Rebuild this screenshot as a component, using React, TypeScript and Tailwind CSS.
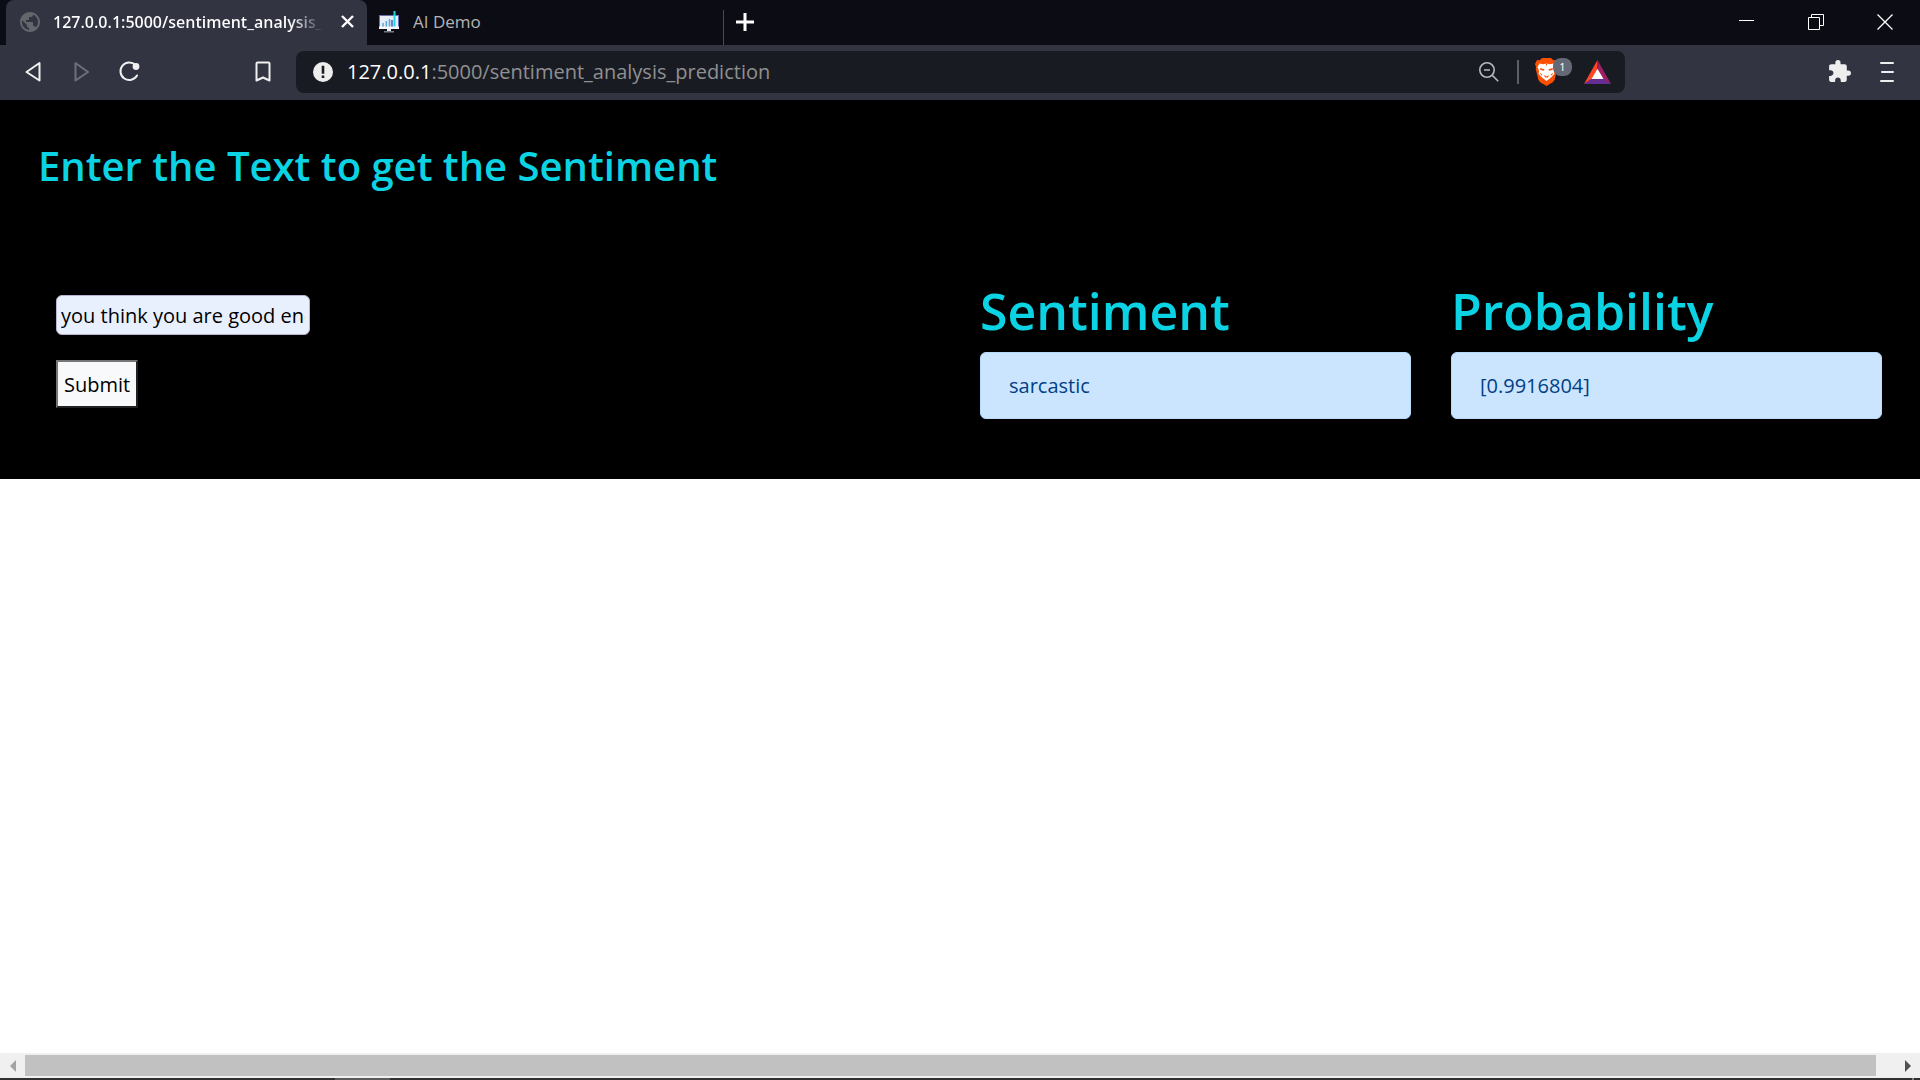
import React from "react";
import { MdExtension, MdPublic } from "react-icons/md";

function TabStrip() {
  return (
    <header className="flex h-[45px] items-stretch bg-[#0c0c14] pl-1.5 leading-6">
      <div className="flex w-[361px] items-center rounded-t-lg bg-[#323442] pr-3 pb-0.5 pl-3">
        <MdPublic className="size-6 shrink-0 text-[#63666b]" />
        <span className="ml-[11px] whitespace-nowrap bg-linear-to-r from-white from-88% to-transparent bg-clip-text text-base font-semibold text-transparent">
          127.0.0.1:5000/sentiment_analysis_
        </span>
        <button aria-label="Close tab" className="ml-auto">
          <svg width="13" height="13" viewBox="0 0 13 13" stroke="#fff" strokeWidth="2.4" className="mr-px">
            <path d="M1 1l11 11M12 1L1 12" />
          </svg>
        </button>
      </div>
      <div className="flex w-[356px] items-center pb-0.5 pl-3">
        <svg width="20" height="22" viewBox="0 0 20 22" aria-hidden="true">
          <path d="M5 20h10v1.6H5zM8 18h4v3H8z" fill="#777b84" />
          <rect x="8" y="18" width="4" height="2" fill="#e8ebf2" />
          <rect x="0.5" y="4.5" width="19" height="13" fill="#e9edf8" stroke="#6670a8" />
          <rect x="0" y="15.5" width="20" height="2.5" fill="#f5f6fa" />
          <path d="M4 12v3.500M7.300 10v5.500M10.500 8v7.500" stroke="#5aa9dc" strokeWidth="1.600" />
          <path d="M13 9v6.500" stroke="#4868c8" strokeWidth="1.600" />
          <path d="M15.500 0v15.500" stroke="#20d8e0" strokeWidth="2" />
        </svg>
        <span className="ml-3.5 text-[17px] text-[#b4b4b6]">AI Demo</span>
      </div>
      <div className="flex items-center">
        <span className="mt-2.5 w-px self-stretch bg-[#4c4c50]" />
        <button aria-label="New tab" className="ml-3 pb-0.5">
          <svg width="18" height="18" viewBox="0 0 18 18" stroke="#fff" strokeWidth="3">
            <path d="M9 0v18M0 9h18" />
          </svg>
        </button>
      </div>
      <div className="ml-auto flex items-center pr-px pb-0.5">
        <button aria-label="Minimize" className="flex w-[69px] justify-center">
          <svg width="15" height="15" viewBox="0 0 15 15"><path d="M0 6.500h15" stroke="#fff" /></svg>
        </button>
        <button aria-label="Restore" className="flex w-[69px] justify-center">
          <svg width="16" height="16" viewBox="0 0 16 16" fill="none" stroke="#fff">
            <path d="M0.500 3.500h11v12h-11zM3.500 3.500v-3h12v11h-4" />
          </svg>
        </button>
        <button aria-label="Close window" className="flex w-[69px] justify-center">
          <svg width="16" height="16" viewBox="0 0 16 16" stroke="#fff" strokeWidth="1.300"><path d="M.5.5l15 15M15.500.5l-15 15" /></svg>
        </button>
      </div>
    </header>
  );
}

function ShieldLion() {
  return (
    <svg width="23" height="28" viewBox="0 0 23 28" aria-hidden="true">
      <path d="M7 0h9l2.300 2.300 2.700-.3 2 4-1 3 .3 2-2.800 11-1.700 2.300L11.500 28l-6.300-3.700L3.500 22 .7 11 1 9 0 6l2-4 2.700.3z" fill="#fb4f04" />
      <path d="M4.500 5.500l3.500.7 3.500-.7 3.500.7 3.500-.7 2 3.500-1.500 4 .3 3-3.300 3.500-4.500 3.500L7 19.500 3.700 16l.3-3-1.500-4z" fill="#fff" />
      <path d="M5 10l4.500 1.200-.5 1.600-3.500-.8zM18 10l-4.500 1.200.5 1.600 3.500-.8zM9 17l2.500 1.500L14 17l-1 2.500h-3zM5 14.500l2.500 2.500-1.500.5zM18 14.500L15.500 17l1.500.5zM10.500 5.500h2l-1 2.500z" fill="#fb4f04" />
    </svg>
  );
}

function Toolbar() {
  return (
    <nav className="flex h-[55px] items-center bg-[#323442] pb-0.5" aria-label="Browser toolbar">
      <div className="flex w-[296px] shrink-0 items-center pl-6 text-[#f0f0f0]">
        <button aria-label="Back" className="w-[18px]">
          <svg width="18" height="22" viewBox="0 0 18 22" fill="none" stroke="currentColor" strokeWidth="2" strokeLinejoin="round"><path d="M15.500 2v17.500L2.500 11z" /></svg>
        </button>
        <button aria-label="Forward" className="ml-[29px] text-[#6d6f7a]">
          <svg width="18" height="22" viewBox="0 0 18 22" fill="none" stroke="currentColor" strokeWidth="2" strokeLinejoin="round"><path d="M4.500 2v17.500L17 11z" /></svg>
        </button>
        <button aria-label="Reload" className="ml-7">
          <svg width="24" height="22" viewBox="0 0 24 22" fill="none" stroke="currentColor" strokeWidth="2"><path d="M18.500 4A8.800 8.800 0 1 0 20 14.500" strokeLinecap="round" /><circle cx="19" cy="5.500" r="3.400" fill="currentColor" stroke="none" /></svg>
        </button>
        <button aria-label="Bookmark this page" className="ml-auto mr-[25px]">
          <svg width="16" height="22" viewBox="0 0 16 22" fill="none" stroke="currentColor" strokeWidth="2" strokeLinejoin="round"><path d="M2.500 1.500h11q1 0 1 1v17l-6.500-3-6.500 3v-17q0-1 1-1z" /></svg>
        </button>
      </div>
      <div className="flex h-[42px] flex-1 items-center rounded-lg bg-[#191b22] pl-[17px] pr-3.5">
        <svg width="20" height="20" viewBox="0 0 20 20" aria-hidden="true"><circle cx="10" cy="10" r="10" fill="#eee" /><path d="M8.700 3.800h2.600v8H8.700zM8.700 13.500h2.600v2.600H8.700z" fill="#191b22" /></svg>
        <span className="ml-3.5 whitespace-nowrap text-[20px] leading-7 text-[#8f9092]">
          <span className="text-white">127.0.0.1</span>:5000/sentiment_analysis_prediction
        </span>
        <button aria-label="Zoom" className="ml-auto">
          <svg width="20" height="20" viewBox="0 0 20 20" fill="none" stroke="#b8b9bd" strokeWidth="1.600"><circle cx="8" cy="8" r="7.200" /><path d="M5 8h6M13.200 13.200l6 6" /></svg>
        </button>
        <span className="ml-[18px] h-6 w-0.5 bg-[#5e6069]" />
        <button aria-label="Brave Shields, 1 blocked" className="relative ml-4 h-[28px] w-[37px]">
          <ShieldLion />
          <span className="absolute top-0 right-0 flex h-[18px] w-[19px] items-center justify-center rounded-lg bg-[#656875] text-[11px] leading-none text-white">1</span>
        </button>
        <button aria-label="Brave Rewards" className="ml-3">
          <svg width="27" height="24" viewBox="0 0 27 24"><path d="M13.500 0L0 24l8.200-5 5.300-10z" fill="#ff4724" /><path d="M13.500 0L27 24l-8.200-5-5.300-10z" fill="#9e1f63" /><path d="M0 24h27l-7-5H7z" fill="#662d91" /><path d="M13.500 8.800l6 10.200h-12z" fill="#fff" /></svg>
        </button>
      </div>
      <div className="flex w-[295px] shrink-0 items-center justify-end pr-[26px] text-[#eee]">
        <button aria-label="Extensions"><MdExtension className="size-[25px]" /></button>
        <button aria-label="Menu" className="ml-7">
          <svg width="14" height="20" viewBox="0 0 14 20" stroke="currentColor" strokeWidth="2" strokeLinecap="round"><path d="M1 1h12M2 10h11M1 19h12" /></svg>
        </button>
      </div>
    </nav>
  );
}

function Result({ title, value }: { title: string; value: string }) {
  return (
    <section className="px-5">
      <h2 className="text-[50px] leading-[60px] font-semibold text-[#0bd3e3]">{title}</h2>
      <p className="mt-[11px] rounded-md border border-[#b8daff] bg-[#cce5ff] px-7 py-4 text-[20px] leading-[33px] text-[#004085]">{value}</p>
    </section>
  );
}

export default function App() {
  return (
    <div className="flex min-h-screen flex-col bg-white font-['Open_Sans','Noto_Sans',sans-serif]">
      <TabStrip />
      <Toolbar />
      <main className="flex-1">
        <div className="bg-black px-[18px] pt-9 pb-[60px]">
          <h1 className="px-5 text-[40px] leading-[60px] font-semibold text-[#0bd3e3]">Enter the Text to get the Sentiment</h1>
          <div className="mt-[85px] grid grid-cols-4">
            <form className="col-span-2 flex flex-col items-start pt-3.5 pl-[38px]" onSubmit={(e) => e.preventDefault()}>
              <input
                aria-label="Text to analyse"
                defaultValue="you think you are good enough"
                className="h-10 w-[254px] rounded-md border border-[#b9b4cf] bg-[#e8f0fe] px-1 text-[20px] text-black"
              />
              <button className="mt-[25px] h-12 border-2 border-[#767676] border-r-[#212121] border-b-[#212121] bg-[#f8f9fa] px-1.5 pt-0.5 text-[20px] text-black">Submit</button>
            </form>
            <Result title="Sentiment" value="sarcastic" />
            <Result title="Probability" value="[0.9916804]" />
          </div>
        </div>
      </main>
      <footer>
        <div className="flex h-[25px] items-center bg-[#f0f0f0]">
          <button aria-label="Scroll left" className="flex w-[25px] justify-center">
            <svg width="6" height="12" viewBox="0 0 6 12"><path d="M6 0v12L0 6z" fill="#a3a3a3" /></svg>
          </button>
          <div className="h-[21px] flex-1 bg-[#c1c1c1]" />
          <button aria-label="Scroll right" className="flex w-11 justify-end pr-[9px]">
            <svg width="6" height="12" viewBox="0 0 6 12"><path d="M0 0v12l6-6z" fill="#505050" /></svg>
          </button>
        </div>
        <div className="flex h-0.5 bg-[#303030]">
          <div className="ml-[335px] w-[55px] bg-[#5a5a5a]" />
          <div className="ml-auto mr-[6px] w-0.5 bg-[#808080]" />
        </div>
      </footer>
    </div>
  );
}
